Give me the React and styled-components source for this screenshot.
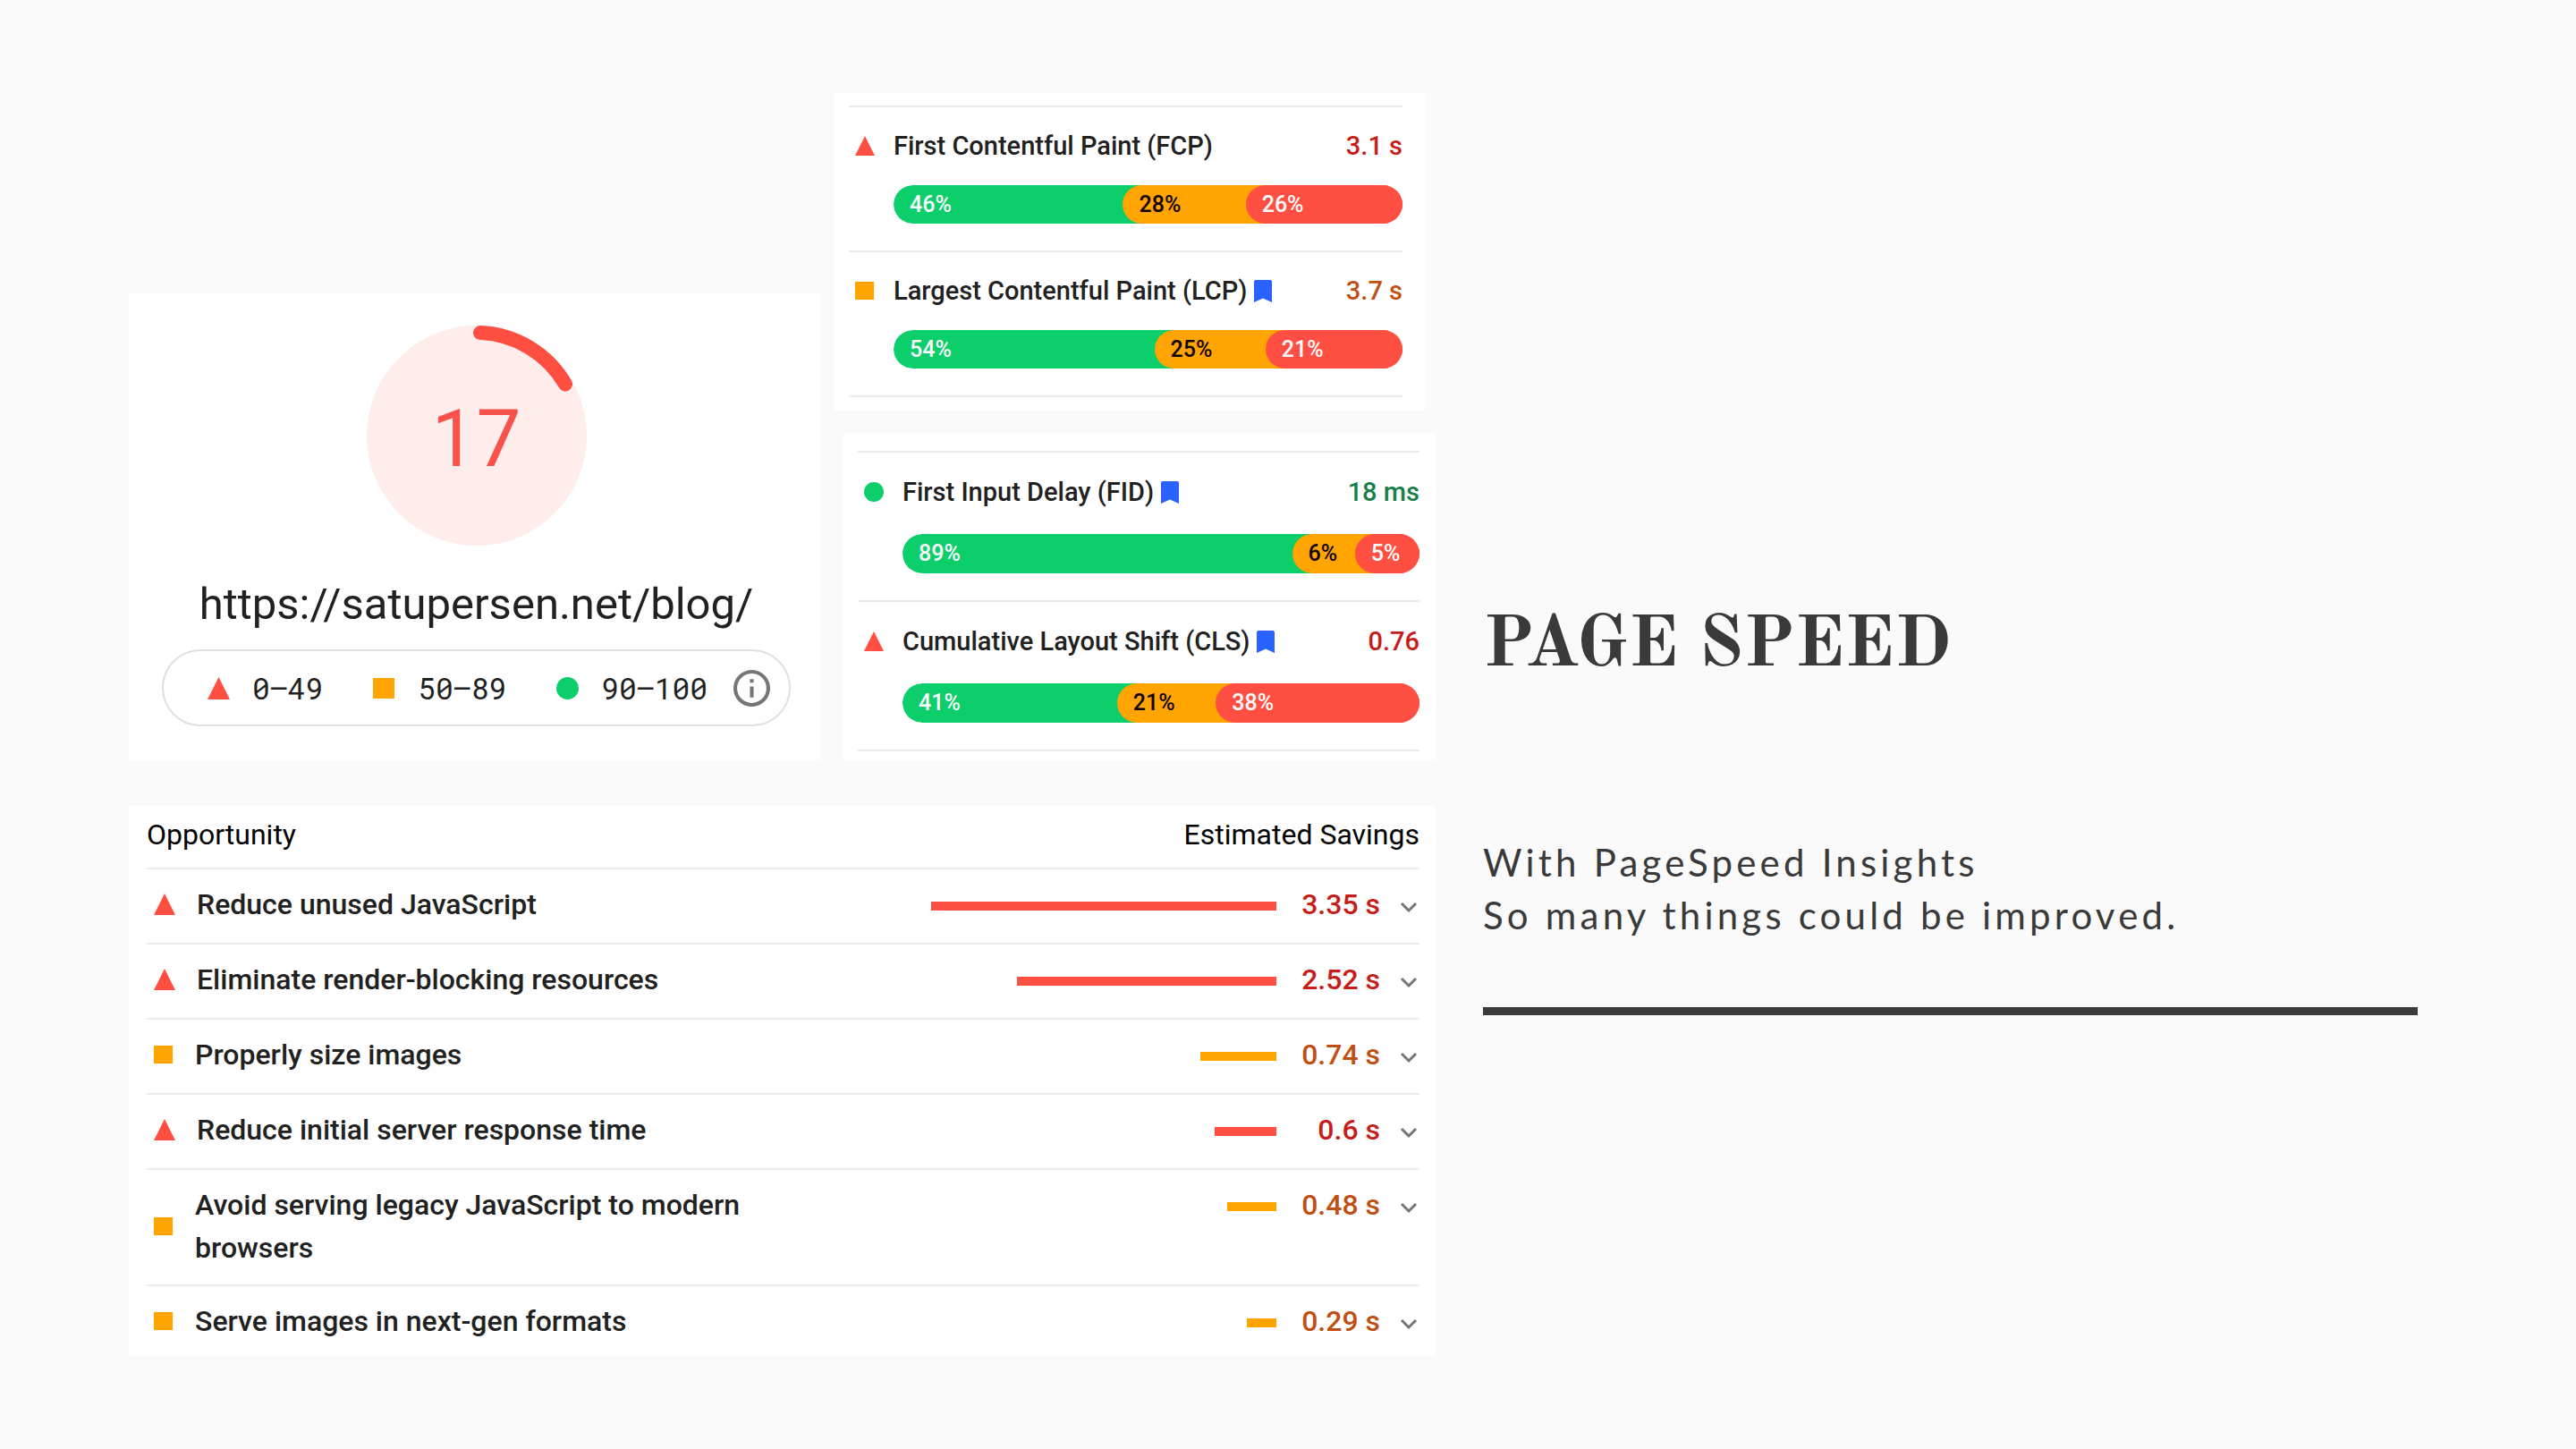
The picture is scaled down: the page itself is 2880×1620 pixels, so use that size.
import React from "react";
import styled, { createGlobalStyle } from "styled-components";

const color = {
  fail: "#ff4e42",
  average: "#ffa400",
  pass: "#0cce6b",
};
const inkColor = {
  fail: "#c61c1a",
  average: "#c04f14",
  pass: "#177f49",
};

const GlobalStyle = createGlobalStyle`
  *, *::before, *::after { box-sizing: border-box; }
  body {
    margin: 0;
    background: #fafafa;
    color: #212121;
    font-family: Roboto, "Liberation Sans", sans-serif;
  }
  h1, h2, p, ul { margin: 0; padding: 0; }
`;

const Page = styled.main`
  min-height: 100vh;
  display: grid;
  grid-template-columns: minmax(0, 1461fr) minmax(0, 1045fr);
  column-gap: 53px;
  align-content: center;
  padding: 104px 177px 104px 144px;
`;

const Report = styled.div`
  display: flex;
  flex-direction: column;
  gap: 51px;
`;

const Overview = styled.div`
  display: grid;
  grid-template-columns: minmax(0, 773fr) minmax(0, 673fr);
  column-gap: 15px;
  align-items: end;
`;

const Card = styled.section`
  background: #fff;
`;

const ScoreCard = styled(Card)`
  display: flex;
  flex-direction: column;
  align-items: center;
  padding: 36px 33px 38px 37px;
`;

const Gauge = styled.div`
  display: grid;
  width: 246px;
  height: 246px;
  > * { grid-area: 1 / 1; }
  svg { display: block; width: 100%; height: 100%; }
`;

const Score = styled.span`
  place-self: center;
  padding-top: 8px;
  font-size: 89px;
  line-height: 96px;
  color: #f8524a;
`;

const SiteUrl = styled.h2`
  margin: 38px 0 22px;
  font-size: 49px;
  line-height: 56px;
  font-weight: 400;
`;

const Legend = styled.div`
  align-self: stretch;
  display: flex;
  align-items: center;
  justify-content: space-between;
  height: 86px;
  padding: 0 21px 0 49px;
  border: 2px solid #e0e0e0;
  border-radius: 43px;
`;

const Ranges = styled.ul`
  display: flex;
  gap: 56px;
  list-style: none;
`;

const Range = styled.li`
  display: flex;
  align-items: center;
  gap: 25px;
  font-family: "Roboto Mono", Inter, "Liberation Mono", monospace;
  font-size: 33px;
  line-height: 40px;
  font-variant-numeric: tabular-nums slashed-zero;
`;

const IconButton = styled.button`
  display: flex;
  padding: 0;
  border: 0;
  background: none;
  color: #757575;
  cursor: pointer;
  svg { display: block; }
`;

const Metrics = styled.div`
  display: flex;
  flex-direction: column;
  gap: 25px;
`;

const MetricCard = styled(Card)`
  width: calc(100% - 11px);
  align-self: ${(p) => p.$align};
  padding: ${(p) => p.$padding};
`;

const MetricList = styled.div`
  border-top: 2px solid #ebebeb;
`;

const Metric = styled.article`
  display: grid;
  grid-template-columns: 22px minmax(0, 1fr) auto;
  column-gap: 21px;
  row-gap: ${(p) => (p.$roomy ? 27 : 24)}px;
  align-items: center;
  padding: ${(p) => (p.$roomy ? 24 : 23)}px 0 30px 7px;
  border-bottom: 2px solid #ebebeb;
`;

const MetricName = styled.h2`
  display: flex;
  align-items: center;
  gap: 8px;
  font-size: 29px;
  line-height: 40px;
  font-weight: 500;
`;

const MetricValue = styled.span`
  font-size: 29px;
  line-height: 40px;
  font-weight: 500;
  color: ${(p) => inkColor[p.$status]};
`;

const Distribution = styled.div`
  grid-column: 2 / -1;
  display: flex;
  border-radius: 22px;
  overflow: hidden;
  line-height: ${(p) => (p.$roomy ? 44 : 43)}px;
`;

const Segment = styled.span`
  flex: ${(p) => p.$share} 1 0;
  min-width: 0;
  text-indent: 18px;
  border-radius: 22px 0 0 22px;
  background: ${(p) => color[p.$status]};
  box-shadow: 22px 0 0 ${(p) => color[p.$status]};
  color: ${(p) => (p.$status === "average" ? "#0f0000" : "#fff")};
  font-size: 25px;
  font-weight: 500;
`;

const OpportunityCard = styled(Card)`
  padding: 0 18px 0 20px;
`;

const Table = styled.table`
  width: 100%;
  table-layout: fixed;
  border-collapse: separate;
  border-spacing: 0;
  font-size: 32px;
  line-height: 48px;
`;

const HeadCell = styled.th`
  height: 71px;
  padding: 8px 0 13px;
  border-bottom: 2px solid #ebebeb;
  color: #000;
  font-weight: 400;
  text-align: ${(p) => p.$align};
`;

const Cell = styled.td`
  height: 84px;
  padding: 15px 0 17px;
  border-bottom: 2px solid #ebebeb;
  font-weight: 500;
  vertical-align: top;
  tr:last-child > & { height: 78px; border-bottom: 0; padding-bottom: 15px; }
`;

const Name = styled.div`
  display: flex;
  align-items: center;
  gap: 24px;
  padding-left: 8px;
  svg { flex: none; }
`;

const Savings = styled.div`
  display: flex;
  align-items: center;
  justify-content: flex-end;
  padding-right: 2px;
  svg { margin-top: 5px; }
`;

const Track = styled.div`
  display: flex;
  justify-content: flex-end;
  width: 386px;
  padding-top: 4px;
`;

const Bar = styled.div`
  height: 10px;
  background: ${(p) => color[p.$status]};
`;

const Amount = styled.span`
  width: 116px;
  margin-right: 22px;
  text-align: right;
  color: ${(p) => inkColor[p.$status]};
`;

const Intro = styled.header`
  padding-top: 569px;
  color: #3a3a3a;
`;

const Title = styled.h1`
  font-family: "Old Standard TT", "Liberation Serif", serif;
  font-size: 81px;
  line-height: 100px;
  font-weight: 700;
`;

const Lead = styled.p`
  margin: 162px 0 73px;
  font-family: Lato, sans-serif;
  font-size: 42px;
  line-height: 59px;
  letter-spacing: 0.1em;
`;

const Rule = styled.hr`
  height: 9px;
  margin: 0;
  border: 0;
  background: #3a3a3a;
`;

function StatusIcon({ status, size = 22 }) {
  return (
    <svg width={size} height={size} viewBox="0 0 24 24" aria-hidden="true">
      {status === "fail" && <path d="M12 0 24 24H0z" fill={color.fail} />}
      {status === "average" && <path d="M0 1h23v22H0z" fill={color.average} />}
      {status === "pass" && <circle cx="12" cy="12" r="12" fill={color.pass} />}
    </svg>
  );
}

function Bookmark() {
  return (
    <svg width="20" height="25" viewBox="0 0 20 25" aria-hidden="true">
      <path d="M2 0h16a2 2 0 0 1 2 2v23l-10-4.5L0 25V2a2 2 0 0 1 2-2z" fill="#2962ff" />
    </svg>
  );
}

const fieldData = [
  {
    align: "flex-start",
    padding: "14px 26px 15px 17px",
    metrics: [
      { name: "First Contentful Paint (FCP)", value: "3.1 s", status: "fail", parts: [[46, 256], [28, 137], [26, 175]] },
      { name: "Largest Contentful Paint (LCP)", value: "3.7 s", status: "average", core: true, parts: [[54, 291], [25, 124], [21, 153]] },
    ],
  },
  {
    align: "flex-end",
    roomy: true,
    padding: "20px 18px 10px 16px",
    metrics: [
      { name: "First Input Delay (FID)", value: "18 ms", status: "pass", core: true, parts: [[89, 434], [6, 70], [5, 72]] },
      { name: "Cumulative Layout Shift (CLS)", value: "0.76", status: "fail", core: true, parts: [[41, 239], [21, 110], [38, 227]] },
    ],
  },
];

const order = ["pass", "average", "fail"];

const opportunities = [
  { name: "Reduce unused JavaScript", seconds: 3.35, status: "fail" },
  { name: "Eliminate render-blocking resources", seconds: 2.52, status: "fail" },
  { name: "Properly size images", seconds: 0.74, status: "average" },
  { name: "Reduce initial server response time", seconds: 0.6, status: "fail" },
  { name: "Avoid serving legacy JavaScript to modern browsers", seconds: 0.48, status: "average" },
  { name: "Serve images in next-gen formats", seconds: 0.29, status: "average" },
];
const longest = 3.35;

export default function App() {
  return (
    <>
      <GlobalStyle />
      <Page>
        <Report>
          <Overview>
            <ScoreCard>
              <Gauge>
                <svg viewBox="0 0 246 246" aria-hidden="true">
                  <circle cx="123" cy="123" r="123" fill="#ffedeb" />
                  <path d="M127 8.1A115 115 0 0 1 222 65.5" fill="none" stroke={color.fail} strokeWidth="16" strokeLinecap="round" />
                </svg>
                <Score>17</Score>
              </Gauge>
              <SiteUrl>https://satupersen.net/blog/</SiteUrl>
              <Legend>
                <Ranges>
                  <Range><StatusIcon status="fail" size={25} />0–49</Range>
                  <Range><StatusIcon status="average" size={25} />50–89</Range>
                  <Range><StatusIcon status="pass" size={25} />90–100</Range>
                </Ranges>
                <IconButton type="button" aria-label="Score information">
                  <svg width="41" height="41" viewBox="2 2 20 20" fill="currentColor">
                    <path d="M11 7h2v2h-2zm0 4h2v6h-2zm1-9C6.48 2 2 6.48 2 12s4.48 10 10 10 10-4.48 10-10S17.52 2 12 2zm0 18c-4.41 0-8-3.59-8-8s3.59-8 8-8 8 3.59 8 8-3.59 8-8 8z" />
                  </svg>
                </IconButton>
              </Legend>
            </ScoreCard>
            <Metrics>
              {fieldData.map((group) => (
                <MetricCard key={group.align} $align={group.align} $padding={group.padding}>
                  <MetricList>
                    {group.metrics.map((m) => (
                      <Metric key={m.name} $roomy={group.roomy}>
                        <StatusIcon status={m.status} />
                        <MetricName>
                          {m.name}
                          {m.core && <Bookmark />}
                        </MetricName>
                        <MetricValue $status={m.status}>{m.value}</MetricValue>
                        <Distribution $roomy={group.roomy}>
                          {m.parts.map(([percent, share], i) => (
                            <Segment key={order[i]} $status={order[i]} $share={share}>
                              {percent}%
                            </Segment>
                          ))}
                        </Distribution>
                      </Metric>
                    ))}
                  </MetricList>
                </MetricCard>
              ))}
            </Metrics>
          </Overview>
          <OpportunityCard>
            <Table>
              <thead>
                <tr>
                  <HeadCell scope="col" $align="left">Opportunity</HeadCell>
                  <HeadCell scope="col" $align="right">Estimated Savings</HeadCell>
                </tr>
              </thead>
              <tbody>
                {opportunities.map((o) => (
                  <tr key={o.name}>
                    <Cell>
                      <Name>
                        <StatusIcon status={o.status} size={o.status === "fail" ? 24 : 22} />
                        {o.name}
                      </Name>
                    </Cell>
                    <Cell>
                      <Savings>
                        <Track>
                          <Bar $status={o.status} style={{ width: `${(o.seconds / longest) * 100}%` }} />
                        </Track>
                        <Amount $status={o.status}>{o.seconds} s</Amount>
                        <IconButton type="button" aria-label={`Show details: ${o.name}`}>
                          <svg width="20" height="14" viewBox="0 0 20 14" fill="none" stroke="currentColor" strokeWidth="3">
                            <path d="m2 3 8 8 8-8" />
                          </svg>
                        </IconButton>
                      </Savings>
                    </Cell>
                  </tr>
                ))}
              </tbody>
            </Table>
          </OpportunityCard>
        </Report>
        <Intro>
          <Title>PAGE SPEED</Title>
          <Lead>
            With PageSpeed Insights
            <br />
            So many things could be improved.
          </Lead>
          <Rule />
        </Intro>
      </Page>
    </>
  );
}
